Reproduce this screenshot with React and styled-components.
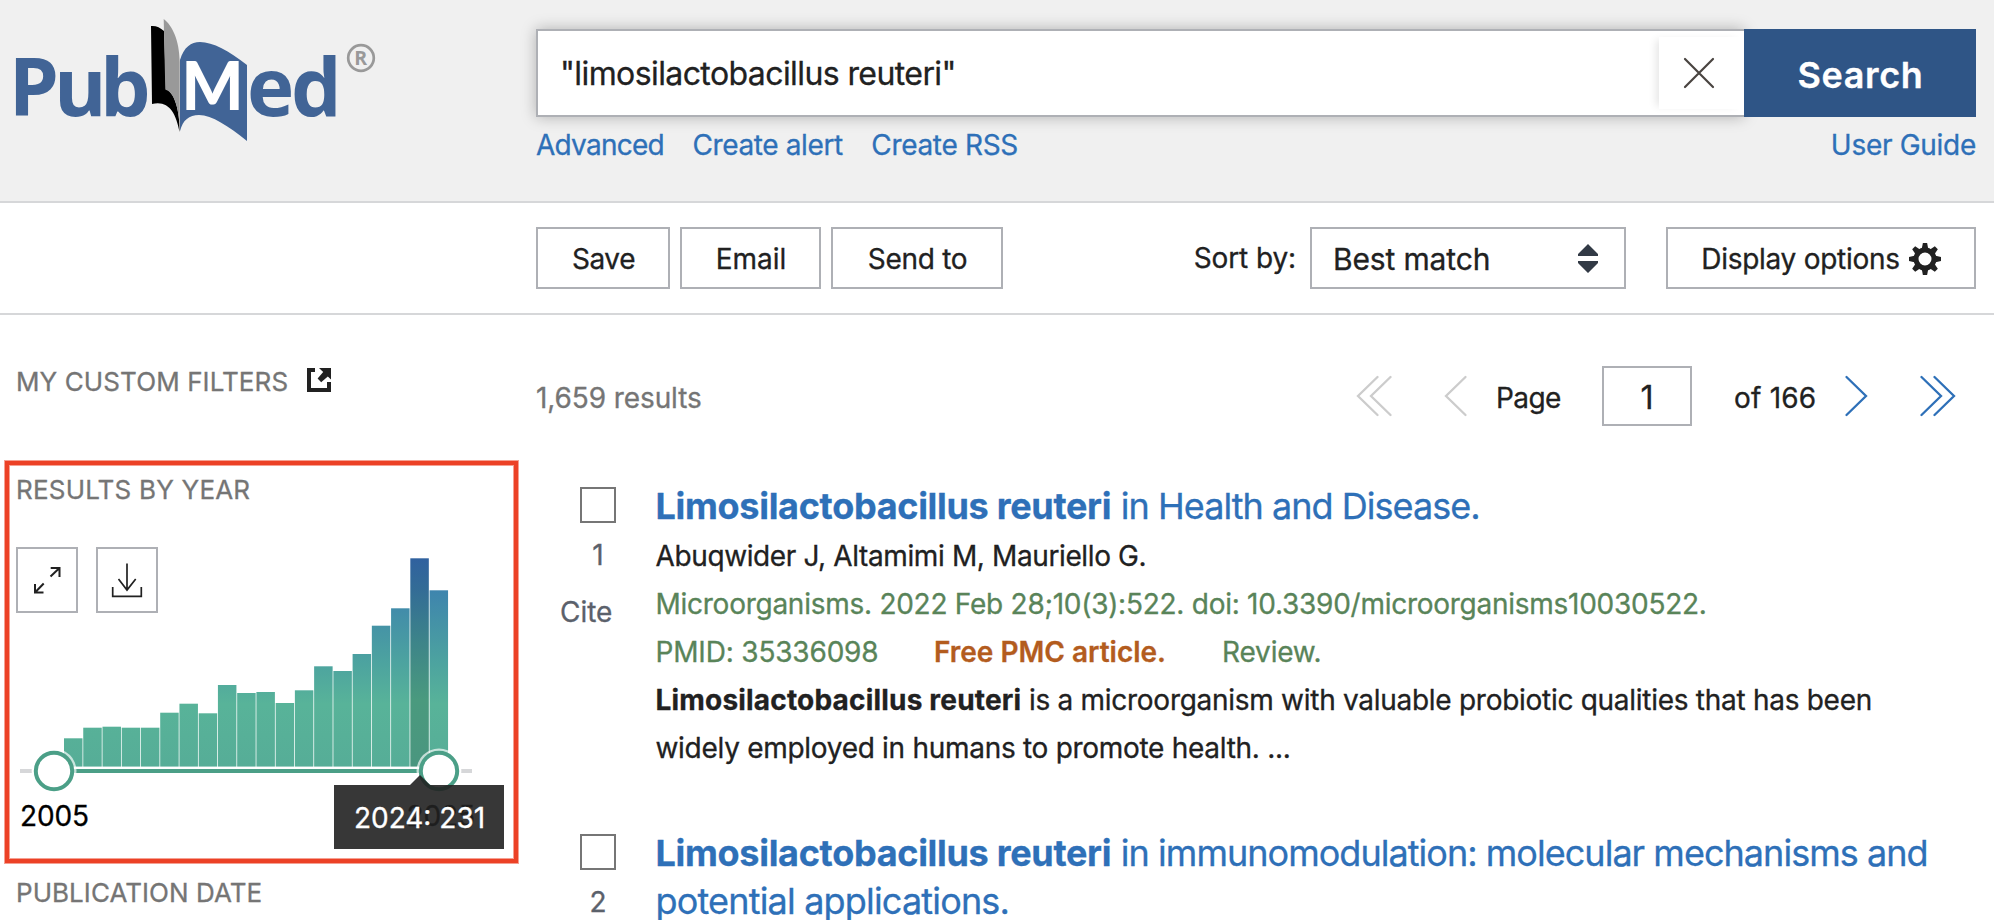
import React from "react";
import styled, { createGlobalStyle } from "styled-components";

const Global = createGlobalStyle`
  *, *::before, *::after { box-sizing: border-box; }
  html, body { margin: 0; padding: 0; background: #fff; }
  body {
    height: 920px;
    overflow: hidden;
    color: #212121;
    font-family: Inter, "Liberation Sans", sans-serif;
    font-size: 28px;
    line-height: 48px;
    -webkit-text-stroke: 0.3px;
  }
  svg { -webkit-text-stroke: 0; }
  a { color: inherit; text-decoration: none; }
  button, input { font: inherit; color: inherit; border-radius: 0; margin: 0; }
`;

const Page = styled.div`
  width: 1994px;
  height: 920px;
  overflow: hidden;
`;

/* ---------- header ---------- */

const Header = styled.header`
  display: grid;
  grid-template-columns: 536px 1440px;
  height: 203px;
  background: #f0f0f0;
  border-bottom: 2px solid #d6d7d9;
`;

const LogoSvg = styled.svg`
  display: block;
  width: 400px;
  height: 160px;
`;

const SearchArea = styled.div`
  padding-top: 29px;
`;

const SearchForm = styled.div`
  display: flex;
  height: 88px;
`;

const SearchField = styled.div`
  flex: 1;
  display: flex;
  align-items: center;
  background: #fff;
  border: 2px solid #aeb0b5;
  border-right: 0;
  box-shadow: 0 0 14px rgba(0, 0, 0, 0.27);
`;

const SearchInput = styled.input`
  flex: 1;
  height: 84px;
  padding: 0 0 0 22px;
  border: 0;
  outline: 0;
  background: transparent;
  font-size: 32px;
  letter-spacing: -0.59px;
`;

const ClearButton = styled.button`
  display: flex;
  align-items: center;
  justify-content: center;
  width: 85px;
  height: 72px;
  padding: 0 5px 0 0;
  border: 0;
  background: #fff;
  box-shadow: -6px 0 8px -3px rgba(0, 0, 0, 0.1);
`;

const SearchButton = styled.button`
  position: relative;
  width: 232px;
  border: 0;
  padding: 3px 0 0 1px;
  background: #2f5586;
  color: #fff;
  font-size: 36px;
  font-weight: 600;
  letter-spacing: 0.6px;
`;

const SearchLinks = styled.nav`
  display: flex;
  gap: 28.5px;
  margin-top: 8px;
  color: #2e70b8;
  line-height: 40px;
`;

const SearchLink = styled.a`
  letter-spacing: ${(p) => p.$track || 0}px;
  margin-left: ${(p) => (p.$end ? "auto" : 0)};
`;

/* ---------- toolbar ---------- */

const Toolbar = styled.div`
  display: flex;
  align-items: flex-start;
  height: 112px;
  padding: 24px 18px 0 536px;
  border-bottom: 2px solid #d6d7d9;
`;

const OutlineButton = styled.button`
  display: flex;
  align-items: center;
  justify-content: center;
  width: ${(p) => p.$width}px;
  height: 62px;
  margin-right: ${(p) => p.$after || 0}px;
  padding: 1px 0 0 1px;
  border: 2px solid #aeb0b5;
  background: #fff;
  letter-spacing: ${(p) => p.$track || 0}px;
`;

const SortLabel = styled.span`
  margin-left: auto;
  padding-right: 14px;
  line-height: 63px;
  letter-spacing: -0.1px;
`;

const SortSelect = styled.div`
  display: flex;
  align-items: center;
  justify-content: space-between;
  width: 316px;
  height: 62px;
  margin-right: 40px;
  padding: 1px 26px 0 21px;
  border: 2px solid #aeb0b5;
  font-size: 30px;
  letter-spacing: -0.15px;
`;

/* ---------- body ---------- */

const Body = styled.div`
  display: grid;
  grid-template-columns: 536px 1440px;
`;

const Sidebar = styled.aside`
  padding-top: 51px;
`;

const SideHeading = styled.h3`
  display: flex;
  gap: 19px;
  margin: 0 0 0 ${(p) => p.$indent}px;
  color: #757575;
  font-size: 26px;
  font-weight: 400;
  line-height: 32px;
  letter-spacing: ${(p) => p.$track}px;
  svg { margin-top: 2px; }
`;

const YearPanel = styled.section`
  position: relative;
  width: 513px;
  height: 402px;
  margin: 63px 0 14px 5px;
  padding-top: 9px;
  border: 4px solid #ec4126;
  box-shadow: 0 0 0 1px rgba(236, 65, 38, 0.5), inset 0 0 0 1px rgba(236, 65, 38, 0.5);
`;

const ChartStack = styled.div`
  display: grid;
  margin: 41px 0 0 7px;
  > * { grid-area: 1 / 1; }
`;

const ChartSvg = styled.svg`
  display: block;
  width: 470px;
  height: 250px;
`;

const ChartTools = styled.div`
  display: flex;
  gap: 18px;
`;

const ToolButton = styled.button`
  width: 62px;
  height: 66px;
  padding: 0;
  border: 2px solid #aeb0b5;
  background: #fff;
  svg { display: block; }
`;

const YearLabels = styled.div`
  display: flex;
  justify-content: space-between;
  width: 455px;
  margin: -5px 0 0 11px;
  color: #000;
  line-height: 48px;
  letter-spacing: -0.1px;
`;

const Tooltip = styled.div`
  position: absolute;
  left: 325px;
  top: 320px;
  width: 170px;
  height: 64px;
  padding-left: 1px;
  background: rgba(33, 33, 33, 0.9);
  color: #fff;
  line-height: 66px;
  text-align: center;
  &::before {
    content: "";
    position: absolute;
    left: 76px;
    bottom: 100%;
    border: 10px solid transparent;
    border-top: 0;
    border-bottom-color: rgba(33, 33, 33, 0.9);
  }
`;

/* ---------- results ---------- */

const Results = styled.main`
  padding-top: 51px;
`;

const ResultsTop = styled.div`
  display: flex;
  justify-content: space-between;
  height: 60px;
`;

const ResultCount = styled.div`
  padding-top: 8px;
  color: #757575;
  letter-spacing: -0.1px;
`;

const Pager = styled.div`
  display: grid;
  grid-template-columns: 88px 52px 106px 90px 152px 76px 56px;
  align-items: center;
`;

const PagerText = styled.span`
  padding: 3px 0 0 ${(p) => p.$indent || 0}px;
  letter-spacing: ${(p) => p.$track}px;
`;

const PageInput = styled.input`
  width: 90px;
  height: 60px;
  padding: 2px 0 0;
  border: 2px solid #aeb0b5;
  outline: 0;
  background: #fff;
  font-size: 32px;
  text-align: center;
`;

const Article = styled.article`
  display: grid;
  grid-template-columns: 119.5px 1fr;
  margin-top: ${(p) => p.$before}px;
`;

const Marker = styled.div`
  color: #5b616b;
  line-height: 40px;
`;

const Checkbox = styled.div`
  width: 36px;
  height: 36px;
  margin: 5px 0 12px 44px;
  border: 2px solid #767676;
  background: #fff;
`;

const Index = styled.div`
  width: 124px;
  text-align: center;
`;

const Cite = styled.div`
  margin: 17px 0 0 24px;
`;

const Title = styled.h2`
  margin: 0 0 2px;
  color: #2e70b8;
  font-size: 36px;
  font-weight: 400;
  line-height: 48px;
  letter-spacing: -0.97px;
  b { font-weight: 700; letter-spacing: -0.3px; margin-right: 0.5px; }
`;

const TitleTail = styled.span`
  letter-spacing: -0.82px;
`;

const Line = styled.div`
  white-space: nowrap;
  color: ${(p) => p.$color || "#212121"};
  letter-spacing: ${(p) => p.$track || 0}px;
  b { font-weight: 700; letter-spacing: 0.19px; }
`;

const FreeTag = styled.span`
  margin: 0 56px 0 55.5px;
  color: #b35c1e;
  font-weight: 600;
  letter-spacing: 0;
`;

/* ---------- drawings ---------- */

function Logo() {
  const word = {
    fontFamily: "'Open Sans', 'Noto Sans', sans-serif",
    fontWeight: 700,
    fontSize: 80,
    fill: "#416496",
  };
  return (
    <LogoSvg viewBox="0 0 400 160">
      <text {...word} x="8.8 54 100" y="116">Pub</text>
      <path d="M151 26 C156 25.5 160 27.5 164 31 L166 89 C174 92 180 110 179.5 132 C176 112 168 100 152 104 Z" fill="#000" />
      <path d="M163.7 19 C172 25 179.5 40 179.7 62 V131 C179.5 108 174 92 165.3 89.5 Z" fill="#999" />
      <path d="M180 60 C184 47 191 42 200 42 C213 42 229 51 247 65 V141 C228 126 212 115 199 115 C189 115 183 120 180 131 Z" fill="#416496" />
      <text x="181.5" y="110" fontFamily="Lato, sans-serif" fontWeight="900" fontSize="66" fill="#fff" textLength="62" lengthAdjust="spacingAndGlyphs">M</text>
      <text {...word} x="247 291" y="116">ed</text>
      <circle cx="361" cy="58" r="12.8" fill="none" stroke="#999" strokeWidth="2.7" />
      <text x="354.3" y="65" fontFamily="'Open Sans', sans-serif" fontWeight="700" fontSize="19.5" fill="#999">R</text>
    </LogoSvg>
  );
}

const CloseIcon = () => (
  <svg width="32" height="32" viewBox="0 0 32 32" stroke="#494440" strokeWidth="2.2" strokeLinecap="round">
    <path d="M2 2 30 30M30 2 2 30" />
  </svg>
);

const SortIcon = () => (
  <svg width="20" height="29" viewBox="0 0 20 29" fill="#323a45">
    <path d="M10 0 20 10V12H0V10ZM10 29 20 19V17H0V19Z" />
  </svg>
);

const GearSvg = styled.svg`
  margin-left: 8px;
`;

const GearIcon = () => (
  <GearSvg width="34" height="34" viewBox="-17 -17 34 34" fill="#212121">
    <circle r="9" fill="none" stroke="#212121" strokeWidth="5" />
    {[0, 45, 90, 135, 180, 225, 270, 315].map((a) => (
      <path key={a} d="M-3.4 -9.5 -2.1 -16H2.1L3.4 -9.5Z" transform={`rotate(${a})`} />
    ))}
  </GearSvg>
);

const ExternalIcon = () => (
  <svg width="24" height="24" viewBox="0 0 24 24" fill="#212121">
    <path d="M8 0H0V24H24V14H20V20H4V4H8ZM12 0H24V11.5L20.8 8.4 14.2 14.2 10.6 10.6 16.2 4Z" />
  </svg>
);

const ExpandIcon = () => (
  <svg width="58" height="62" viewBox="18 549 58 62" fill="none" stroke="#212121" strokeWidth="2">
    <path d="M50.7 568H59.5V577M59.5 568 50.5 576.5M35 584V592.5H43.5M35 592.5 43.7 583.5" />
  </svg>
);

const DownloadIcon = () => (
  <svg width="58" height="62" viewBox="98 549 58 62" fill="none" stroke="#212121" strokeWidth="1.7">
    <path d="M127 563.5V590M118.5 579 127 590 135.7 579M112.7 587V596.3H141.3V587" />
  </svg>
);

function Chevrons({ color, double, flip }) {
  const w = double ? 36 : 24;
  return (
    <svg width={w} height="44" viewBox={`0 0 ${w} 44`} fill="none" stroke={color} strokeWidth="2.3" strokeLinecap="round">
      <g transform={flip ? `translate(${w} 0) scale(-1 1)` : undefined}>
        <path d={`M21.5 3 2 22 21.5 41${double ? "M34.5 3 15 22 34.5 41" : ""}`} />
      </g>
    </svg>
  );
}

const BAR_TOPS = [
  738.3, 727.7, 726.7, 727.7, 727.7, 712.7, 703.7, 713.3, 685, 693,
  692, 703, 690.3, 666.3, 671, 654, 625.7, 608.3, 558.3, 590.3,
];

function YearChart() {
  return (
    <ChartSvg viewBox="16 547 470 250">
      <defs>
        <linearGradient id="bar" gradientUnits="userSpaceOnUse" x1="0" x2="0" y1="558" y2="767">
          <stop offset="0" stopColor="#3776b8" />
          <stop offset="0.15" stopColor="#3e84ae" />
          <stop offset="0.32" stopColor="#4593a6" />
          <stop offset="0.51" stopColor="#4da49f" />
          <stop offset="0.7" stopColor="#58b399" />
          <stop offset="1" stopColor="#56ad97" />
        </linearGradient>
        <linearGradient id="barActive" gradientUnits="userSpaceOnUse" x1="0" x2="0" y1="558" y2="767">
          <stop offset="0" stopColor="#30619f" />
          <stop offset="0.15" stopColor="#336c96" />
          <stop offset="0.4" stopColor="#3d8489" />
          <stop offset="0.68" stopColor="#4a9a7e" />
          <stop offset="1" stopColor="#4a967f" />
        </linearGradient>
      </defs>
      {BAR_TOPS.map((top, i) => (
        <rect
          key={i}
          x={64 + i * 19.24}
          y={top}
          width="18.5"
          height={766.7 - top}
          fill={i === 18 ? "url(#barActive)" : "url(#bar)"}
        />
      ))}
      <path d="M20 771H32M461 771H472" stroke="#d6d7d9" strokeWidth="4" />
      <path d="M54 771H439" stroke="#fff" strokeOpacity="0.7" strokeWidth="8.5" />
      <path d="M54 771H439" stroke="#4b9f87" strokeWidth="4" />
      {[54, 439].map((cx) => (
        <g key={cx}>
          <circle cx={cx} cy="771" r="22.5" fill="#fff" fillOpacity="0.68" />
          <circle cx={cx} cy="771" r="18.2" fill="#fff" stroke="#4b9f87" strokeWidth="4" />
        </g>
      ))}
    </ChartSvg>
  );
}

export default function App() {
  return (
    <Page>
      <Global />
      <Header>
        <Logo />
        <SearchArea>
          <SearchForm>
            <SearchField>
              <SearchInput defaultValue={'"limosilactobacillus reuteri"'} spellCheck={false} />
              <ClearButton aria-label="Clear"><CloseIcon /></ClearButton>
            </SearchField>
            <SearchButton>Search</SearchButton>
          </SearchForm>
          <SearchLinks>
            <SearchLink $track={-0.75}>Advanced</SearchLink>
            <SearchLink $track={-0.38}>Create alert</SearchLink>
            <SearchLink $track={-0.32}>Create RSS</SearchLink>
            <SearchLink $track={-0.29} $end>User Guide</SearchLink>
          </SearchLinks>
        </SearchArea>
      </Header>

      <Toolbar>
        <OutlineButton $width={134} $after={10} $track={-0.4}>Save</OutlineButton>
        <OutlineButton $width={141} $after={10}>Email</OutlineButton>
        <OutlineButton $width={172} $track={-0.28}>Send to</OutlineButton>
        <SortLabel>Sort by:</SortLabel>
        <SortSelect>Best match<SortIcon /></SortSelect>
        <OutlineButton $width={310} $track={-0.27}>Display options<GearIcon /></OutlineButton>
      </Toolbar>

      <Body>
        <Sidebar>
          <SideHeading $indent={16} $track={0.1}>MY CUSTOM FILTERS<ExternalIcon /></SideHeading>
          <YearPanel>
            <SideHeading $indent={7} $track={0.2}>RESULTS BY YEAR</SideHeading>
            <ChartStack>
              <YearChart />
              <ChartTools>
                <ToolButton aria-label="Expand"><ExpandIcon /></ToolButton>
                <ToolButton aria-label="Download"><DownloadIcon /></ToolButton>
              </ChartTools>
            </ChartStack>
            <YearLabels><span>2005</span><span>2025</span></YearLabels>
            <Tooltip>2024: 231</Tooltip>
          </YearPanel>
          <SideHeading $indent={16} $track={0.05}>PUBLICATION DATE</SideHeading>
        </Sidebar>

        <Results>
          <ResultsTop>
            <ResultCount>1,659 results</ResultCount>
            <Pager>
              <Chevrons color="#ccc" double />
              <Chevrons color="#ccc" />
              <PagerText $track={-0.6}>Page</PagerText>
              <PageInput defaultValue="1" />
              <PagerText $indent={42} $track={0.2}>of 166</PagerText>
              <Chevrons color="#2e70b8" flip />
              <Chevrons color="#2e70b8" double flip />
            </Pager>
          </ResultsTop>

          <Article $before={56}>
            <Marker>
              <Checkbox />
              <Index>1</Index>
              <Cite>Cite</Cite>
            </Marker>
            <div>
              <Title><b>Limosilactobacillus reuteri</b> in Health and Disease.</Title>
              <Line $track={-0.38}>Abuqwider J, Altamimi M, Mauriello G.</Line>
              <Line $color="#598459" $track={-0.26}>
                Microorganisms. 2022 Feb 28;10(3):522. doi: 10.3390/microorganisms10030522.
              </Line>
              <Line $color="#598459" $track={-0.18}>
                PMID: 35336098<FreeTag>Free PMC article.</FreeTag>Review.
              </Line>
              <Line $track={-0.28}>
                <b>Limosilactobacillus reuteri</b> is a microorganism with valuable probiotic qualities that has been
              </Line>
              <Line $track={-0.29}>widely employed in humans to promote health. ...</Line>
            </div>
          </Article>

          <Article $before={57}>
            <Marker>
              <Checkbox />
              <Index>2</Index>
            </Marker>
            <div>
              <Title>
                <b>Limosilactobacillus reuteri</b> in immunomodulation: molecular mechanisms and
                <br />
                <TitleTail>potential applications.</TitleTail>
              </Title>
            </div>
          </Article>
        </Results>
      </Body>
    </Page>
  );
}
